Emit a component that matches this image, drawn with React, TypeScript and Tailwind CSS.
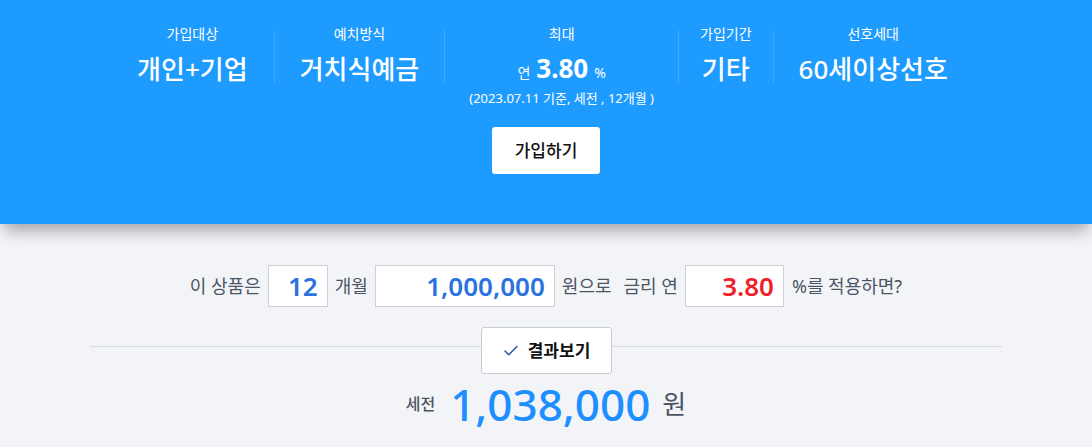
import { Check } from "lucide-react";

const font = { fontFamily: '"Noto Sans", "Noto Sans CJK KR", sans-serif' };

function Divider() {
  return <div className="mt-[5px] h-[53px] w-px bg-white/15" />;
}

function Col({ label, value, px }: { label: string; value: string; px: string }) {
  return (
    <div className={`flex flex-col items-center ${px}`}>
      <p className="text-[14px] leading-[18px]">{label}</p>
      <p className="mt-[8px] text-[26px] font-medium leading-[36px]">{value}</p>
    </div>
  );
}

function Box({ w, value, color }: { w: string; value: string; color: string }) {
  return (
    <div
      className={`flex h-[42px] items-center justify-end border border-[#cdd0d5] bg-white pr-[9px] text-[26px] font-semibold ${w} ${color}`}
    >
      {value}
    </div>
  );
}

export default function App() {
  return (
    <div className="min-h-[447px] overflow-hidden bg-[#f3f4f8]" style={font}>
      <section className="relative z-10 h-[224px] bg-[#1e9bff] pt-[25px] text-white shadow-[0_10px_16px_-4px_rgba(0,0,0,0.35)]">
        <div className="flex justify-center pr-[8px]">
          <Col label="가입대상" value="개인+기업" px="px-[26px]" />
          <Divider />
          <Col label="예치방식" value="거치식예금" px="px-[25px]" />
          <Divider />
          <div className="flex flex-col items-center px-[24px]">
            <p className="text-[14px] leading-[18px]">최대</p>
            <p className="mt-[9px] flex items-baseline gap-[6px] leading-[32px]">
              <span className="text-[14px]">연</span>
              <span className="text-[26px] font-bold">3.80</span>
              <span className="text-[14px]">%</span>
            </p>
            <p className="text-[13px] leading-[18px]">(2023.07.11 기준, 세전 , 12개월 )</p>
          </div>
          <Divider />
          <Col label="가입기간" value="기타" px="px-[21px]" />
          <Divider />
          <Col label="선호세대" value="60세이상선호" px="px-[25px]" />
        </div>
        <div className="mt-[20px] flex justify-center">
          <button className="h-[47px] w-[108px] rounded-[3px] bg-white text-[17px] font-medium text-[#111]">
            가입하기
          </button>
        </div>
      </section>

      <div className="mt-[41px] flex items-center justify-center gap-[7px] text-[18px] text-[#4b5563]">
        <span>이 상품은</span>
        <Box w="w-[60px]" value="12" color="text-[#2b72e0]" />
        <span>개월</span>
        <Box w="w-[180px]" value="1,000,000" color="text-[#2b72e0]" />
        <span className="mr-[5px]">원으로</span>
        <span>금리 연</span>
        <Box w="w-[99px]" value="3.80" color="text-[#f0202a]" />
        <span className="ml-[1px]">%를 적용하면?</span>
      </div>

      <div className="relative mx-[90px] mt-[20px] flex justify-center">
        <div className="absolute left-0 right-0 top-[19px] h-px bg-[#d8dbe0]" />
        <button className="relative flex h-[47px] w-[131px] items-center justify-center gap-[8px] rounded-[3px] border border-[#c8ccd2] bg-white text-[17px] font-bold text-[#111]">
          <Check className="h-[18px] w-[18px] text-[#1e5a96]" strokeWidth={2} />
          결과보기
        </button>
      </div>

      <div className="mt-[2px] flex items-center justify-center gap-[15px]">
        <span className="text-[16px] font-medium text-[#4b5563]">세전</span>
        <span className="mr-[-3px] text-[44px] font-medium leading-[56px] text-[#1e8fff]">1,038,000</span>
        <span className="text-[26px] text-[#4b5563]">원</span>
      </div>
    </div>
  );
}
